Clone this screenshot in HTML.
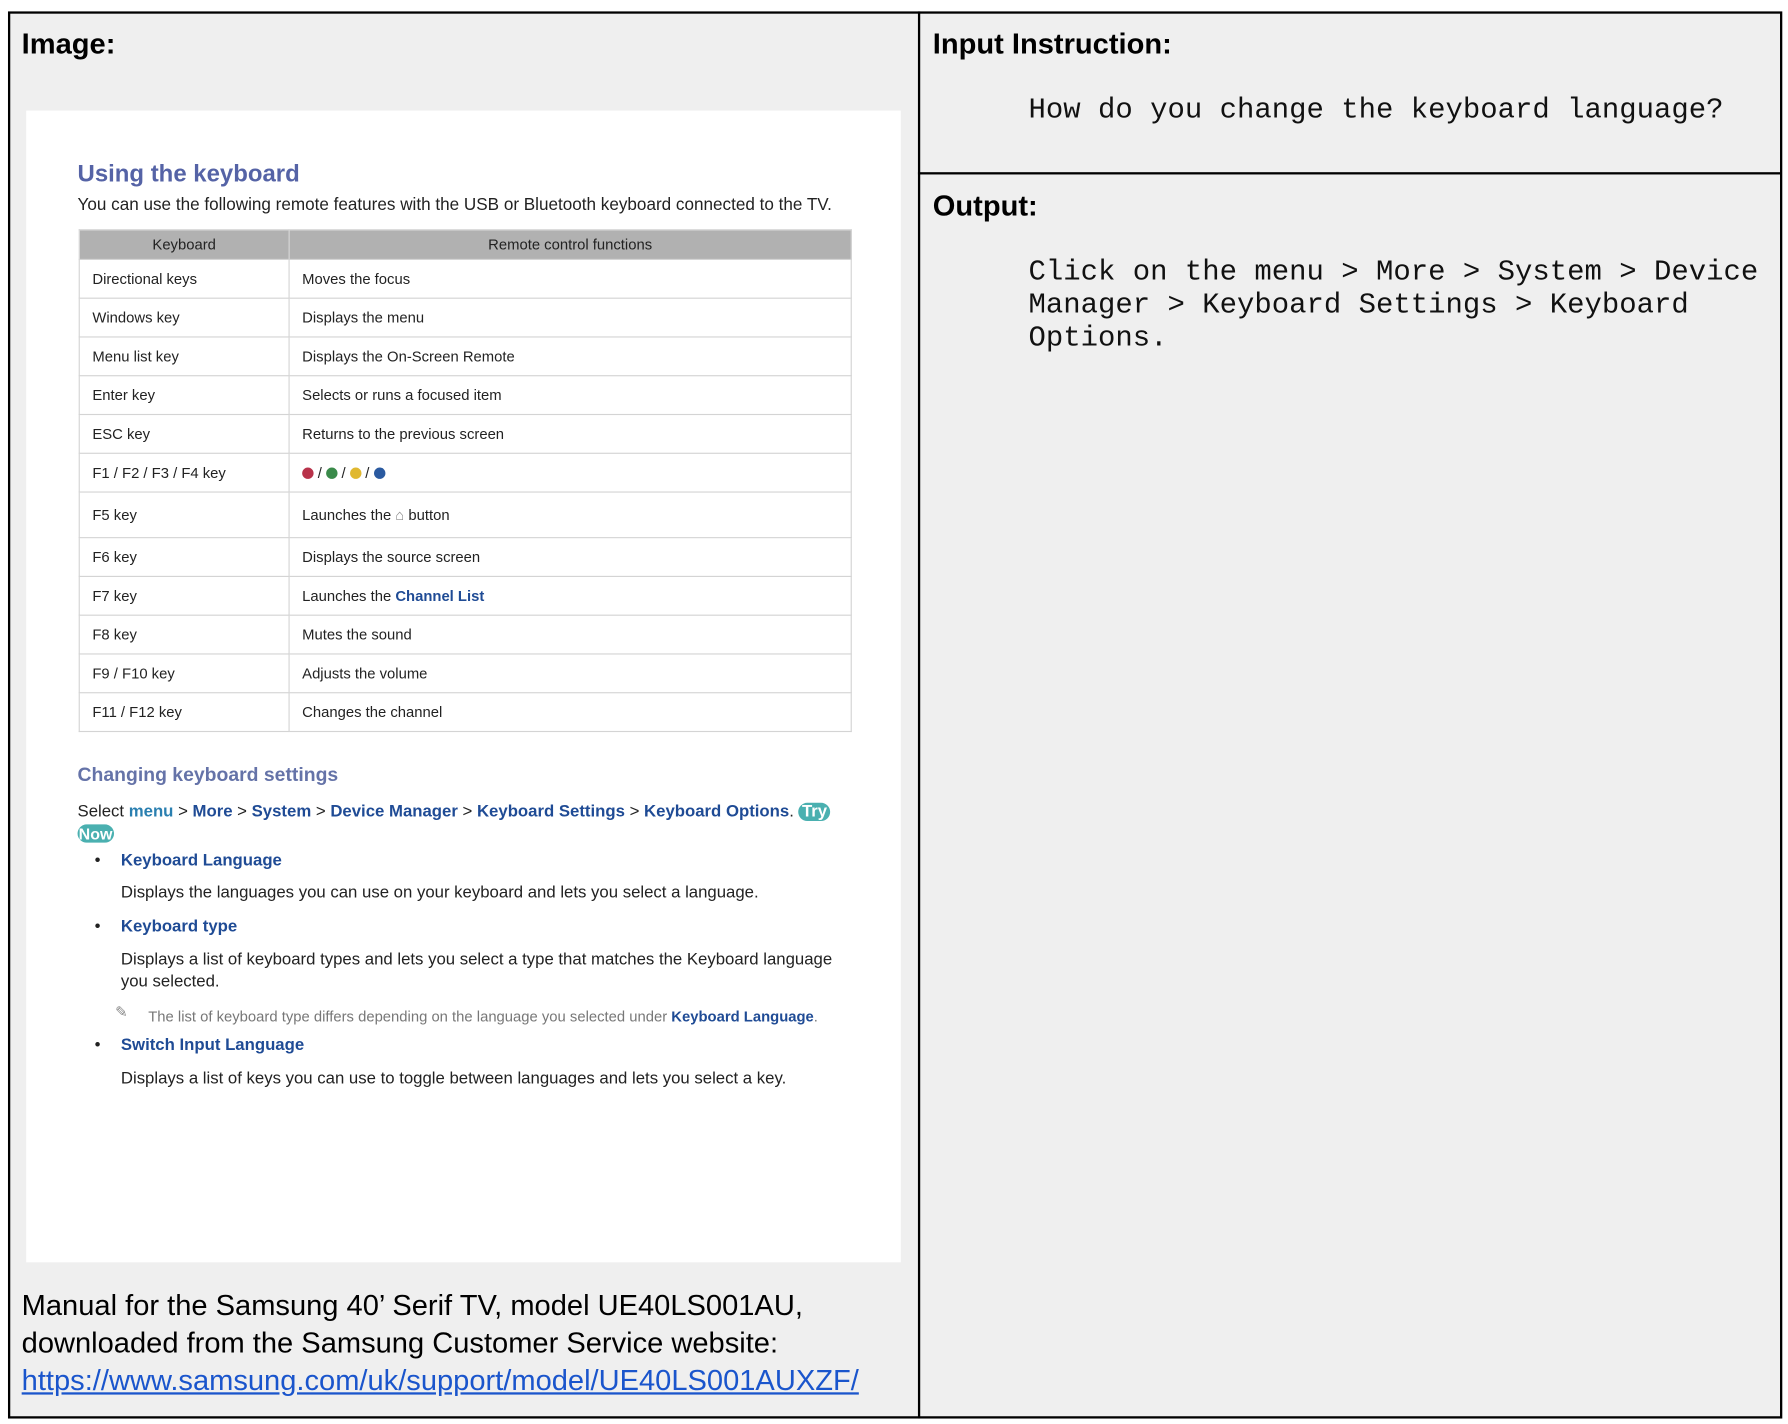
<!DOCTYPE html>
<html><head><meta charset="utf-8"><style>
html,body{margin:0;padding:0;background:#fff;width:1788px;height:1424px;overflow:hidden}
#s{position:absolute;left:0;top:0;width:1568px;height:1248px;transform:scale(1.1403);transform-origin:0 0;font-family:"Liberation Sans",Arial,sans-serif}
.a{position:absolute;white-space:nowrap}
.h{font-weight:bold;font-size:25.5px;color:#000}
.mono{font-family:"Liberation Mono","Courier New",monospace;font-size:25.4px;color:#111;line-height:29px}
.doc{position:absolute;left:23px;top:97px;width:767px;height:1010px;background:#fff}
table{position:absolute;left:46px;top:104px;width:678px;border-collapse:collapse;font-size:13px;color:#222}
td,th{border:1px solid #d4d4d4;padding:0 0 0 11px;text-align:left;font-weight:normal}
th{background:#b1b1b1;text-align:center;padding:0;height:25px}
.d{font-size:14.7px;color:#222}
.b{color:#1f4b95}
.dot{display:inline-block;width:10px;height:10px;border-radius:50%;vertical-align:-1px}
</style></head><body><div id="s">
<div style="position:absolute;left:7px;top:10px;width:1552px;height:1230px;border:2px solid #000;background:#efefef"></div>
<div style="position:absolute;left:805px;top:10px;width:2px;height:1234px;background:#000"></div>
<div style="position:absolute;left:805px;top:151px;width:756px;height:2px;background:#000"></div>

<div class="a h" style="left:19px;top:25px">Image:</div>
<div class="a h" style="left:818px;top:25px">Input Instruction:</div>
<div class="a h" style="left:818px;top:167px">Output:</div>
<div class="a mono" style="left:902px;top:82px">How do you change the keyboard language?</div>
<div class="a mono" style="left:902px;top:224px">Click on the menu &gt; More &gt; System &gt; Device<br>Manager &gt; Keyboard Settings &gt; Keyboard<br>Options.</div>

<div class="doc">
<div class="a" style="left:45px;top:44px;font-size:21px;font-weight:bold;color:#5563a6">Using the keyboard</div>
<div class="a" style="left:45px;top:74px;font-size:15px;color:#222">You can use the following remote features with the USB or Bluetooth keyboard connected to the TV.</div>
<table>
<tr><th style="width:183px">Keyboard</th><th>Remote control functions</th></tr>
<tr style="height:34px"><td>Directional keys</td><td>Moves the focus</td></tr>
<tr style="height:34px"><td>Windows key</td><td>Displays the menu</td></tr>
<tr style="height:34px"><td>Menu list key</td><td>Displays the On-Screen Remote</td></tr>
<tr style="height:34px"><td>Enter key</td><td>Selects or runs a focused item</td></tr>
<tr style="height:34px"><td>ESC key</td><td>Returns to the previous screen</td></tr>
<tr style="height:34px"><td>F1 / F2 / F3 / F4 key</td><td><span class="dot" style="background:#b8324a"></span> / <span class="dot" style="background:#3a8a4a"></span> / <span class="dot" style="background:#e0b830"></span> / <span class="dot" style="background:#2a5aa0"></span></td></tr>
<tr style="height:40px"><td>F5 key</td><td>Launches the <span style="color:#888">⌂</span> button</td></tr>
<tr style="height:34px"><td>F6 key</td><td>Displays the source screen</td></tr>
<tr style="height:34px"><td>F7 key</td><td>Launches the <b class="b">Channel List</b></td></tr>
<tr style="height:34px"><td>F8 key</td><td>Mutes the sound</td></tr>
<tr style="height:34px"><td>F9 / F10 key</td><td>Adjusts the volume</td></tr>
<tr style="height:34px"><td>F11 / F12 key</td><td>Changes the channel</td></tr>
</table>
<div class="a" style="left:45px;top:573px;font-size:17px;font-weight:bold;color:#6573a8">Changing keyboard settings</div>
<div class="a d" style="left:45px;top:607px">Select <b style="color:#2a7fb0">menu</b> &gt; <b class="b">More</b> &gt; <b class="b">System</b> &gt; <b class="b">Device Manager</b> &gt; <b class="b">Keyboard Settings</b> &gt; <b class="b">Keyboard Options</b>. <span style="background:#4ab0b0;color:#fff;border-radius:10px;padding:0 3px;font-weight:bold">Try</span></div>
<div class="a" style="left:45px;top:626px;font-size:14px;background:#4ab0b0;color:#fff;border-radius:9px;padding:0 1px;font-weight:bold">Now</div>
<div class="a d" style="left:60px;top:650px">•</div>
<div class="a d b" style="left:83px;top:650px;font-weight:bold">Keyboard Language</div>
<div class="a d" style="left:83px;top:678px">Displays the languages you can use on your keyboard and lets you select a language.</div>
<div class="a d" style="left:60px;top:708px">•</div>
<div class="a d b" style="left:83px;top:708px;font-weight:bold">Keyboard type</div>
<div class="a d" style="left:83px;top:736px;line-height:19px">Displays a list of keyboard types and lets you select a type that matches the Keyboard language<br>you selected.</div>
<div class="a" style="left:78px;top:783px;font-size:13px;color:#888">✎</div>
<div class="a" style="left:107px;top:787px;font-size:13px;color:#777">The list of keyboard type differs depending on the language you selected under <b class="b">Keyboard Language</b>.</div>
<div class="a d" style="left:60px;top:812px">•</div>
<div class="a d b" style="left:83px;top:812px;font-weight:bold">Switch Input Language</div>
<div class="a d" style="left:83px;top:841px">Displays a list of keys you can use to toggle between languages and lets you select a key.</div>
</div>

<div class="a" style="left:19px;top:1129px;font-size:25.5px;line-height:33px;color:#000">Manual for the Samsung 40’ Serif TV, model UE40LS001AU,<br>downloaded from the Samsung Customer Service website:<br><span style="color:#1a55cc;text-decoration:underline">https://www.samsung.com/uk/support/model/UE40LS001AUXZF/</span></div>
</div></body></html>
